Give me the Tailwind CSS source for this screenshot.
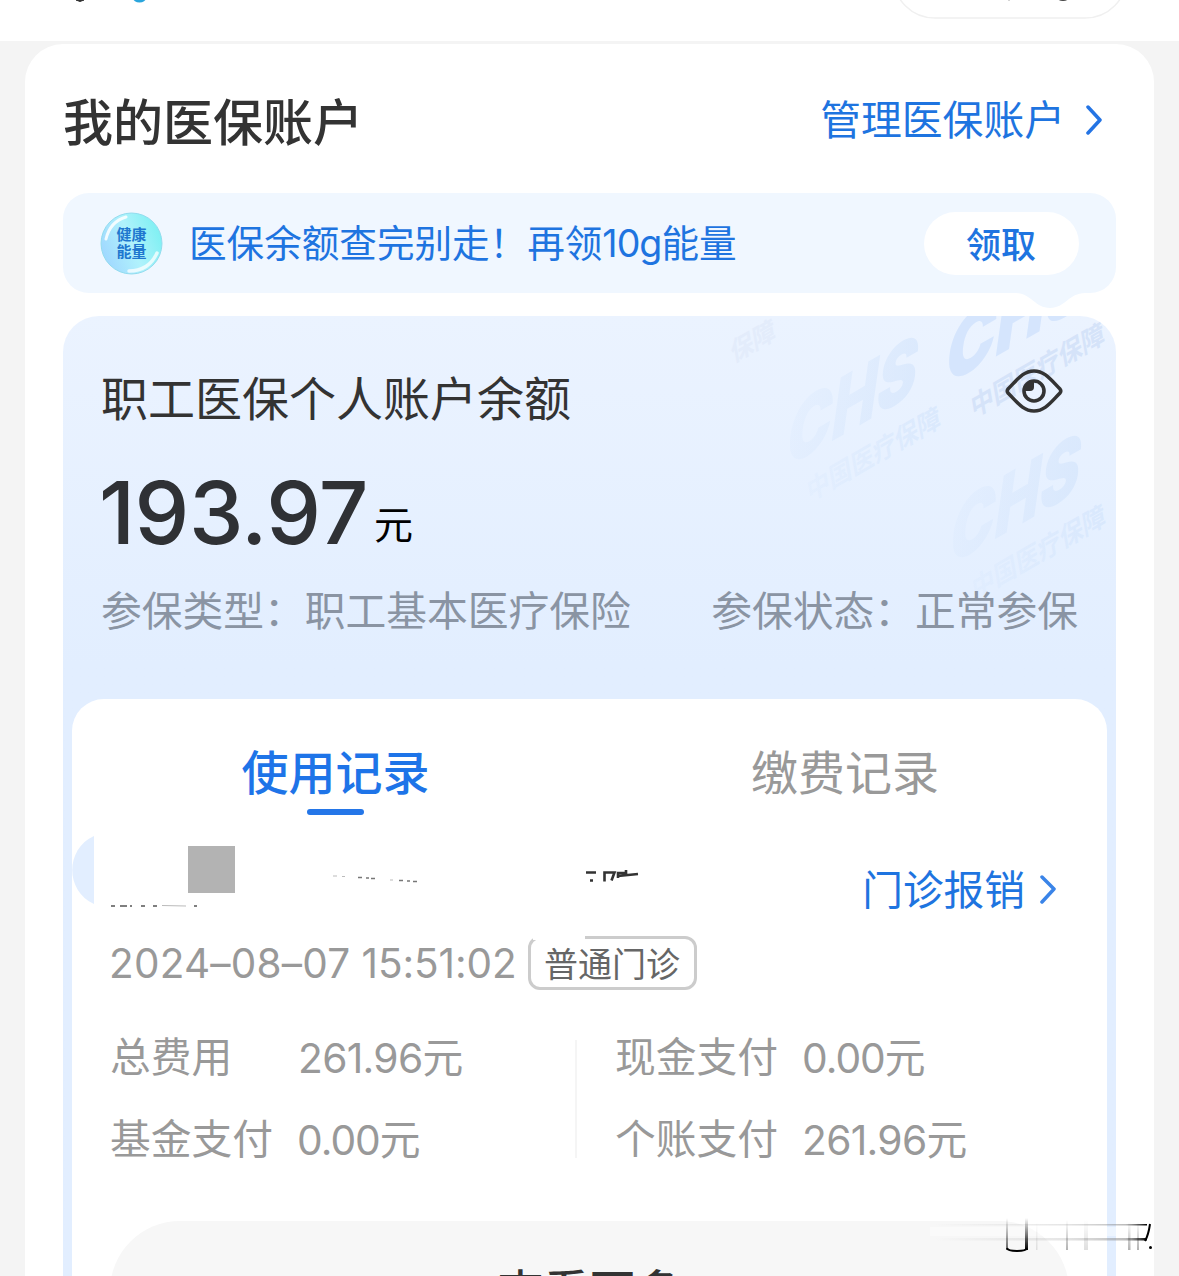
<!DOCTYPE html>
<html lang="zh-CN">
<head>
    <meta charset="UTF-8">
    <meta name="viewport" content="width=device-width, initial-scale=1.0">
    <title>我的医保账户</title>
    <script src="https://cdn.jsdelivr.net/npm/@tailwindcss/browser@4"></script>
</head>
<body class="bg-[#f4f4f4] font-['Inter','Noto_Sans_CJK_SC',sans-serif] text-[#333]">
<div class="relative h-[1276px] w-[1179px] overflow-hidden">

    <!-- Barre du haut -->
    <header class="h-[41px] bg-white">
        <svg class="block" width="1179" height="41" fill="none">
            <path d="M76 0L80 1.500L84 0Z" fill="#333" stroke="#333"/>
            <ellipse cx="139.500" cy="-2" rx="6.500" ry="4.500" fill="#2aa5dc"/>
            <rect x="893" y="-66" width="234" height="84" rx="42" stroke="#f0f0f0" stroke-width="1.500"/>
            <path d="M1009 0V1" stroke="#aaa"/>
            <ellipse cx="1063" cy="-2" rx="6" ry="3" fill="#444"/>
        </svg>
    </header>

    <main class="mx-[25px] mt-[3px] h-[1300px] rounded-t-[38px] bg-white px-[38px]">
        <div class="flex h-[149px] items-center justify-between pt-[8px]">
            <h1 class="text-[50px] font-medium leading-none">我的医保账户</h1>
            <a class="flex items-center gap-[21px] pr-[13px] pb-[4px] text-[40.800px] leading-none text-[#1e74e0]">
                管理医保账户
                <svg width="17" height="32" fill="none" stroke="#2474e4" stroke-width="3.500" stroke-linecap="round" stroke-linejoin="round"><path d="M2 3L14 16L2 29"/></svg>
            </a>
        </div>

        <!-- Bandeau énergie -->
        <div class="relative flex h-[100px] items-center rounded-[26px] bg-[#f0f7ff] pr-[37px] pl-[37px]">
            <div class="relative flex size-[63px] items-center justify-center">
                <svg class="absolute inset-0" width="63" height="63">
                    <defs>
                        <linearGradient id="bubble" x1="0" y1="0.700" x2="1" y2="0.300">
                            <stop offset="0" stop-color="#9fd6ff"/>
                            <stop offset="0.500" stop-color="#b0f2fc"/>
                            <stop offset="1" stop-color="#7cf0f2"/>
                        </linearGradient>
                    </defs>
                    <circle cx="31.500" cy="31.500" r="30.500" fill="url(#bubble)" stroke="#93dcee" stroke-width="1"/>
                    <path d="M6 27C9 14 16 8 26 5" fill="none" stroke="#fff" stroke-opacity="0.850" stroke-width="3" stroke-linecap="round"/>
                    <path d="M29 59C43 59 52 52 57 41" fill="none" stroke="#fff" stroke-opacity="0.750" stroke-width="3.500" stroke-linecap="round"/>
                </svg>
                <span class="relative w-[30px] text-[15px] font-bold leading-[17px] text-[#1f77cf]">健康能量</span>
            </div>
            <p class="ml-[26px] pt-[1px] text-[37.600px] leading-none whitespace-nowrap text-[#1e74e0]">医保余额查完别走！再领<span class="tracking-[-1px]">10g</span>能量</p>
            <button class="ml-auto h-[63px] w-[155px] rounded-full bg-white pt-[4px] pr-[1px] text-[35px] font-medium leading-none text-[#1e74e0]">领取</button>
            <svg class="absolute top-[100px] right-[31px]" width="70" height="16"><path d="M0 0C16 0 20 15 35 15S54 0 70 0Z" fill="#f0f7ff"/></svg>
        </div>

        <!-- Carte du solde -->
        <section class="relative mt-[23px] h-[1000px] overflow-hidden rounded-t-[36px] bg-linear-to-b from-[#ebf3ff] via-[#e2eeff] via-35% to-[#e2eeff] px-[9px]">
            <svg class="absolute top-0 right-0" width="400" height="300" viewBox="716 316 400 300">
                <defs>
                    <linearGradient id="fade" x1="0" x2="1">
                        <stop offset="0" stop-color="#c9defa" stop-opacity="0.120"/>
                        <stop offset="1" stop-color="#c9defa" stop-opacity="0.450"/>
                    </linearGradient>
                </defs>
                <g font-weight="900" font-size="70">
                    <g transform="translate(784 469) rotate(-30) skewX(-38)" fill="url(#fade)">
                        <text textLength="150" lengthAdjust="spacingAndGlyphs">CHS</text>
                    </g>
                    <text transform="translate(809 502) rotate(-30) skewX(-20)" font-size="25.500" font-weight="700" fill="url(#fade)">中国医疗保障</text>
                    <g transform="translate(943 387) rotate(-30) skewX(-38)" fill="#d5e5fd">
                        <text textLength="166" lengthAdjust="spacingAndGlyphs">CHS</text>
                    </g>
                    <text transform="translate(973 418) rotate(-30) skewX(-20)" font-size="25.500" font-weight="700" fill="#d5e3f9">中国医疗保障</text>
                    <g transform="translate(947 567) rotate(-30) skewX(-38)" fill="url(#fade)">
                        <text textLength="150" lengthAdjust="spacingAndGlyphs">CHS</text>
                    </g>
                    <text transform="translate(974 600) rotate(-30) skewX(-20)" font-size="25.500" font-weight="700" fill="url(#fade)">中国医疗保障</text>
                    <text transform="translate(733 363) rotate(-30) skewX(-20)" font-size="25" font-weight="700" fill="#e3ecfb">保障</text>
                </g>
            </svg>

            <div class="relative h-[383px] px-[29px] pt-[54px]">
                <div class="flex h-[56px] items-center justify-between pr-[15px]">
                    <h2 class="text-[47px] leading-none">职工医保个人账户余额</h2>
                    <svg class="-mt-[14px]" width="58" height="44" fill="none" stroke="#333" stroke-width="3.600" stroke-linejoin="round">
                        <path d="M3 20C12 11 18 2 29 2S46 11 55 20Q56.500 22 55 24C46 33 40 42 29 42S12 33 3 24Q1.500 22 3 20Z"/>
                        <circle cx="29" cy="22" r="10"/>
                        <path d="M29 12V18Q29 22 25 22H19A10 10 0 0 1 29 12Z" fill="#333" stroke="none"/>
                    </svg>
                </div>
                <div class="mt-[41px] flex h-[90px] items-center">
                    <span class="-ml-[2px] w-[267px] text-[87px] font-medium leading-none tracking-[-0.500px] text-[#2f3135]">193.97</span>
                    <span class="ml-2 pt-[24px] text-[39px] leading-none text-black">元</span>
                </div>
                <div class="mt-[34px] flex h-[42px] items-center justify-between text-[40.750px] leading-none whitespace-nowrap text-[#8a94a3]">
                    <span>参保类型：职工基本医疗保险</span>
                    <span>参保状态：正常参保</span>
                </div>
            </div>

            <!-- Historique -->
            <div class="relative h-[640px] rounded-t-[32px] bg-white">
                <div class="flex pt-[44px] pl-[8px] text-[47px] leading-none">
                    <div class="flex w-[511px] flex-col items-center">
                        <span class="flex h-[58px] items-center font-medium text-[#1e74e8]">使用记录</span>
                        <i class="mt-2 h-[6px] w-[57px] rounded-full bg-[#2476e8]"></i>
                    </div>
                    <div class="flex w-[508px] justify-center">
                        <span class="flex h-[58px] items-center text-[#999]">缴费记录</span>
                    </div>
                </div>

                <!-- Traces restantes du nom masqué -->
                <svg class="absolute top-[131px] left-0" width="600" height="80" viewBox="72 830 600 80">
                    <path d="M94 836C65 849 65 891 94 904Z" fill="#e2eeff"/>
                    <path d="M188 846h47v47h-47z" fill="#b3b3b3"/>
                    <path d="M111 906h4M120 906h7M130 906h2M141 906h4M153 906h4M194 906h3" stroke="#555" stroke-width="1.500"/>
                    <path d="M162 905.500l24 .500" stroke="#bbb"/>
                    <path d="M333 876h4M342 876.500h3M390 880h3" stroke="#bbb"/>
                    <path d="M358 877.500h4M366 878h3M371 878.500h4M399 880.500h4M407 881h3M413 881.500h4" stroke="#777" stroke-width="1.500"/>
                    <path d="M586 872.500h10M590 880.500h3" stroke="#333" stroke-width="2.600"/>
                    <path d="M604.500 881.500v-9h10l-3 8M618 878v-5h9M626 870v4M618 876l20-2" fill="none" stroke="#333" stroke-width="2.600"/>
                </svg>

                <div class="px-[38px]">
                    <a class="mt-[55px] flex h-[42px] items-center justify-end gap-[14px] pr-[12px] text-[40.700px] leading-none text-[#1e74e0]">
                        门诊报销
                        <svg width="18" height="32" fill="none" stroke="#3a84e8" stroke-width="3.500" stroke-linecap="round" stroke-linejoin="round"><path d="M3 2L15 14L3 27"/></svg>
                    </a>
                    <div class="mt-[24px] flex h-[54px] items-center text-[#999]">
                        <span class="-ml-[1px] w-[419px] pt-[2px] text-[40.500px] leading-none tracking-[-0.100px] whitespace-nowrap"><span class="tracking-[0.200px]">2024–08–07</span> 15:51:02</span>
                        <span class="relative flex h-[54px] w-[169px] items-center justify-center rounded-[12px] border-3 border-[#ccc] pt-[4px] pr-[1px] text-[34px] leading-none text-[#666]">普通门诊
                            <i class="absolute -top-[3px] left-[2px] h-[4px] w-[52px] bg-white"></i>
                        </span>
                    </div>

                    <div class="mt-[50px] flex h-[118px] text-[40.750px] leading-none whitespace-nowrap text-[#999]">
                        <div class="grid w-[467px] grid-cols-[188px_1fr] grid-rows-[39px_39px] content-between border-r-2 border-[#f5f5f5]">
                            <span class="-mt-[2px]">总费用</span><span class="-mt-[1px] tracking-[-0.700px]">261.96元</span>
                            <span class="pt-[1px]">基金支付</span><span class="-ml-[1px] pt-[2px] tracking-[-1px]">0.00元</span>
                        </div>
                        <div class="grid grid-cols-[188px_1fr] grid-rows-[39px_39px] content-between pl-[38px]">
                            <span class="-mt-[2px]">现金支付</span><span class="-mt-[1px] -ml-[1px] tracking-[-1px]">0.00元</span>
                            <span class="pt-[1px]">个账支付</span><span class="-ml-[1px] pt-[2px] tracking-[-0.700px]">261.96元</span>
                        </div>
                    </div>

                    <button class="mt-[63px] block h-[140px] w-[959px] rounded-[70px] bg-[#f7f7f7] text-[46px] font-medium leading-none">查看更多</button>
                </div>
            </div>
        </section>
    </main>

    <!-- Traînées en bas à droite -->
    <svg class="absolute top-[1216px] left-[930px]" width="230" height="40" viewBox="930 1216 230 40" fill="none">
        <defs>
            <linearGradient id="h" x1="0" x2="1">
                <stop offset="0" stop-color="#999" stop-opacity="0"/>
                <stop offset="0.600" stop-color="#999" stop-opacity="0.250"/>
                <stop offset="0.900" stop-color="#777" stop-opacity="0.500"/>
                <stop offset="1" stop-color="#000"/>
            </linearGradient>
            <linearGradient id="v" x1="0" y1="0" x2="0" y2="1">
                <stop offset="0" stop-color="#000" stop-opacity="0"/>
                <stop offset="1" stop-color="#000"/>
            </linearGradient>
        </defs>
        <rect x="935" y="1224" width="212" height="1.500" fill="url(#h)"/>
        <rect x="930" y="1227" width="216" height="9" fill="#fff" fill-opacity="0.400"/>
        <rect x="935" y="1238" width="212" height="2.500" fill="url(#h)"/>
        <rect x="1006" y="1218" width="2" height="32" fill="url(#v)" fill-opacity="0.600"/>
        <rect x="1025" y="1218" width="3" height="32" fill="url(#v)"/>
        <path d="M1007 1248C1008 1252 1026 1252 1027 1248" stroke="#000" stroke-width="2"/>
        <g fill="url(#v)">
            <rect x="1036" y="1222" width="1.500" height="28" fill-opacity="0.100"/>
            <rect x="1066" y="1220" width="2" height="30" fill-opacity="0.300"/>
            <rect x="1084" y="1220" width="4" height="30" fill-opacity="0.130"/>
            <rect x="1128" y="1222" width="2.500" height="28" fill-opacity="0.300"/>
            <rect x="1137" y="1222" width="2" height="28" fill-opacity="0.300"/>
        </g>
        <path d="M1150 1224C1149 1231 1148 1236 1145 1241" stroke="#000" stroke-width="2"/>
        <circle cx="1150.500" cy="1247.500" r="1.500" fill="#000"/>
    </svg>
</div>
</body>
</html>
